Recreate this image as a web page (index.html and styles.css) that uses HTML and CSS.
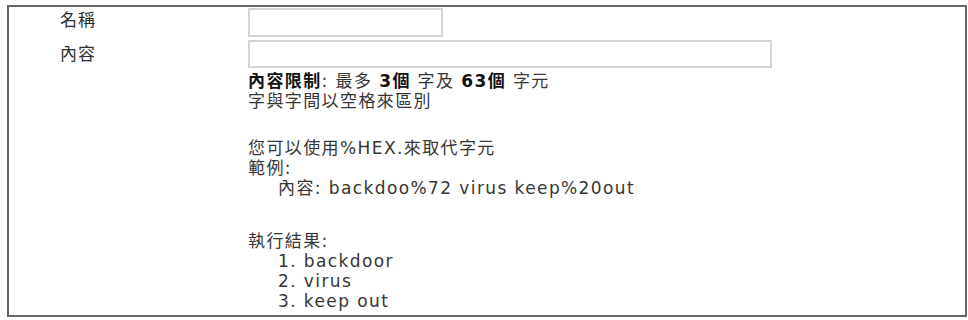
FILE: index.html
```html
<!DOCTYPE html>
<html lang="zh-Hant">
<head>
<meta charset="utf-8">
<link rel="stylesheet" href="styles.css">
</head>
<body>
<div class="panel">
  <div class="row row-name">
    <div class="label">名稱</div>
    <div class="field"><input class="input input-name" type="text"></div>
  </div>
  <div class="row row-content">
    <div class="label">內容</div>
    <div class="field">
      <input class="input input-content" type="text">
      <div class="notes">
        <div class="para">
          <div class="line"><b>內容限制</b>: 最多 <b>3個</b> 字及 <b>63個</b> 字元</div>
          <div class="line">字與字間以空格來區別</div>
        </div>
        <div class="para para-hex">
          <div class="line">您可以使用%HEX.來取代字元</div>
          <div class="line">範例:</div>
          <div class="line indent">內容: backdoo%72 virus keep%20out</div>
        </div>
        <div class="para para-result">
          <div class="line">執行結果:</div>
          <div class="line indent">1. backdoor</div>
          <div class="line indent">2. virus</div>
          <div class="line indent">3. keep out</div>
        </div>
      </div>
    </div>
  </div>
</div>
</body>
</html>
```
FILE: styles.css
```css
html, body {
  margin: 0;
  padding: 0;
  background: #ffffff;
}
body {
  padding: 5px 0 0 7px;
  font-family: "DejaVu Sans", "Noto Sans CJK TC", sans-serif;
  font-size: 17px;
  color: #363636;
}
.panel {
  box-sizing: border-box;
  width: 960px;
  height: 312px;
  border: 2px solid #666666;
  padding-top: 1px;
  background: #fff;
}
.row {
  display: grid;
  grid-template-columns: 239px 1fr;
}
.row-content {
  margin-top: 3px;
}
.label {
  padding-left: 51px;
  line-height: 20px;
  letter-spacing: 1px;
  color: #2e2e2e;
}
.row-name .label { padding-top: 2px; }
.row-content .label { padding-top: 4px; }
.input {
  display: block;
  box-sizing: border-box;
  margin: 0;
  border: 2px solid #d4d4d4;
  background: #fff;
  outline: none;
}
.input-name {
  width: 195px;
  height: 29px;
}
.input-content {
  width: 524px;
  height: 28px;
}
.notes {
  margin-top: 3px;
  letter-spacing: 1.4px;
}
.line {
  line-height: 20px;
  height: 20px;
  white-space: nowrap;
}
.line b {
  color: #111;
}
.para-hex {
  margin-top: 27px;
}
.para-result {
  margin-top: 33px;
}
.indent {
  padding-left: 30px;
}
```
